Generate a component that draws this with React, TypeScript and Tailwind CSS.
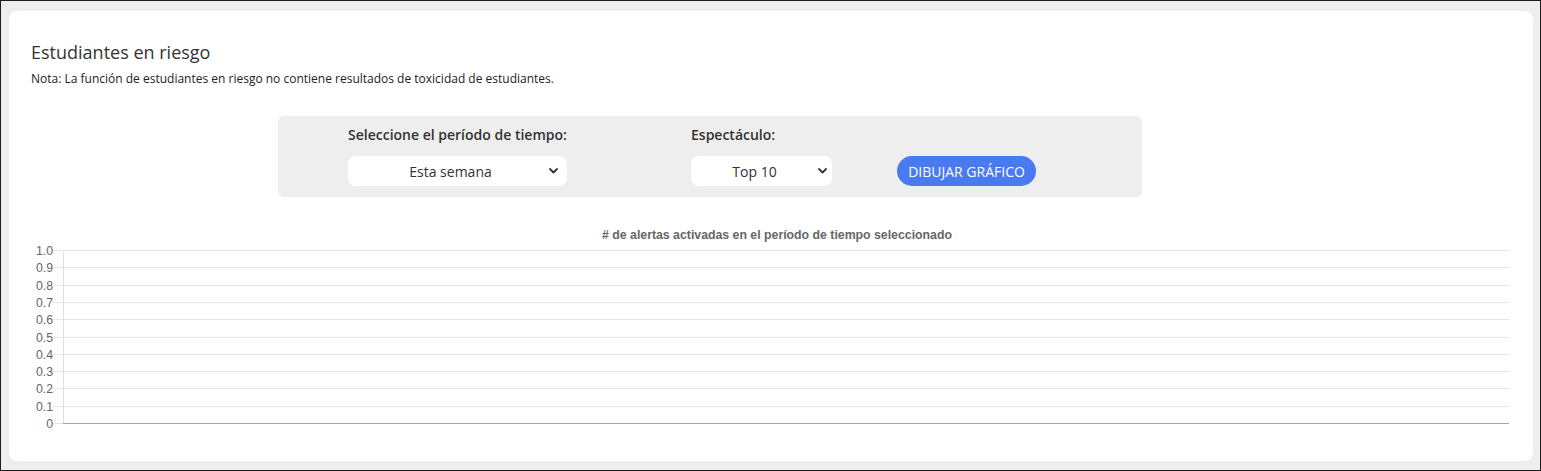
import React from 'react';

const TICKS = [1.0, 0.9, 0.8, 0.7, 0.6, 0.5, 0.4, 0.3, 0.2, 0.1, 0];

// Chevron for the custom selects
const Chevron: React.FC<{ className?: string }> = ({ className }) => (
  <svg className={className} width="9" height="6" viewBox="0 0 9 6" fill="none">
    <path d="M1 1l3.5 3.5L8 1" stroke="#333" strokeWidth="1.8" strokeLinecap="round" strokeLinejoin="round" />
  </svg>
);

interface SelectBoxProps {
  value: string;
  width: string;
  chevronRight: string;
}

const SelectBox: React.FC<SelectBoxProps> = ({ value, width, chevronRight }) => (
  <div className={`relative ${width}`}>
    <select
      defaultValue={value}
      className="h-[30px] w-full appearance-none rounded-lg bg-white pr-[14px] text-center text-[14px] text-[#333] outline-none [text-align-last:center]"
    >
      <option>{value}</option>
    </select>
    <Chevron className={`pointer-events-none absolute top-[12px] ${chevronRight}`} />
  </div>
);

// Empty y-axis chart, drawn like the chart library output
const AlertsChart: React.FC = () => {
  const rows = TICKS.map((t, k) => ({ label: t === 0 ? '0' : t.toFixed(1), y: 8.5 + Math.round(k * 17.3) }));
  return (
    <svg width="1490" height="200" className="block">
      {rows.map((r, k) => (
        <g key={r.label}>
          <line x1="22" x2={k === 10 ? 32 : 1478} y1={r.y} y2={r.y} stroke="#e5e5e5" />
          <text x="22" y={r.y + 4} textAnchor="end" fontSize="12.3" fill="#666" fontFamily="'Liberation Sans', Arial, sans-serif">
            {r.label}
          </text>
        </g>
      ))}
      <line x1="32.5" x2="32.5" y1={rows[0].y} y2={rows[10].y} stroke="#e0e0e0" />
      <line x1="32" x2="1478" y1={rows[10].y} y2={rows[10].y} stroke="#a6a6a6" />
    </svg>
  );
};

const App: React.FC = () => {
  return (
    <div className="h-[471px] w-[1541px] border border-[#1c1c1c] bg-[#eeeeee] pb-[9px] pl-2 pr-[7px] pt-[10px] font-['Open_Sans',sans-serif]">
      <div className="rounded-lg bg-white pb-[19px] pl-[22px] pr-[12px] pt-[30px]">
        {/* Header */}
        <h2 className="text-[18px] leading-[22px] text-[#333]">Estudiantes en riesgo</h2>
        <p className="mt-2 text-[12px] leading-4 text-[#222]">
          Nota: La función de estudiantes en riesgo no contiene resultados de toxicidad de estudiantes.
        </p>

        {/* Filters */}
        <div className="ml-[247px] mt-[29px] flex w-[864px] rounded-md bg-[#eeeeee] pb-[11px] pl-[70px] pt-[9px]">
          <div className="w-[219px]">
            <label className="block text-[14px] font-semibold leading-5 text-[#333]">Seleccione el período de tiempo:</label>
            <div className="mt-[11px]">
              <SelectBox value="Esta semana" width="w-[219px]" chevronRight="right-[9px]" />
            </div>
          </div>
          <div className="ml-[124px] w-[141px]">
            <label className="block text-[14px] font-semibold leading-5 text-[#333]">Espectáculo:</label>
            <div className="mt-[11px]">
              <SelectBox value="Top 10" width="w-[141px]" chevronRight="right-[5px]" />
            </div>
          </div>
          <button className="ml-[65px] h-[30px] w-[139px] self-end rounded-full bg-[#4a7af0] text-[14px] uppercase text-white">
            Dibujar gráfico
          </button>
        </div>

        {/* Chart */}
        <div className="mt-[31px] pl-[2px] text-center font-['Liberation_Sans',Arial,sans-serif] text-[12.3px] font-bold leading-[14px] text-[#666]">
          # de alertas activadas en el período de tiempo seleccionado
        </div>
        <AlertsChart />
      </div>
    </div>
  );
};

export default App;
